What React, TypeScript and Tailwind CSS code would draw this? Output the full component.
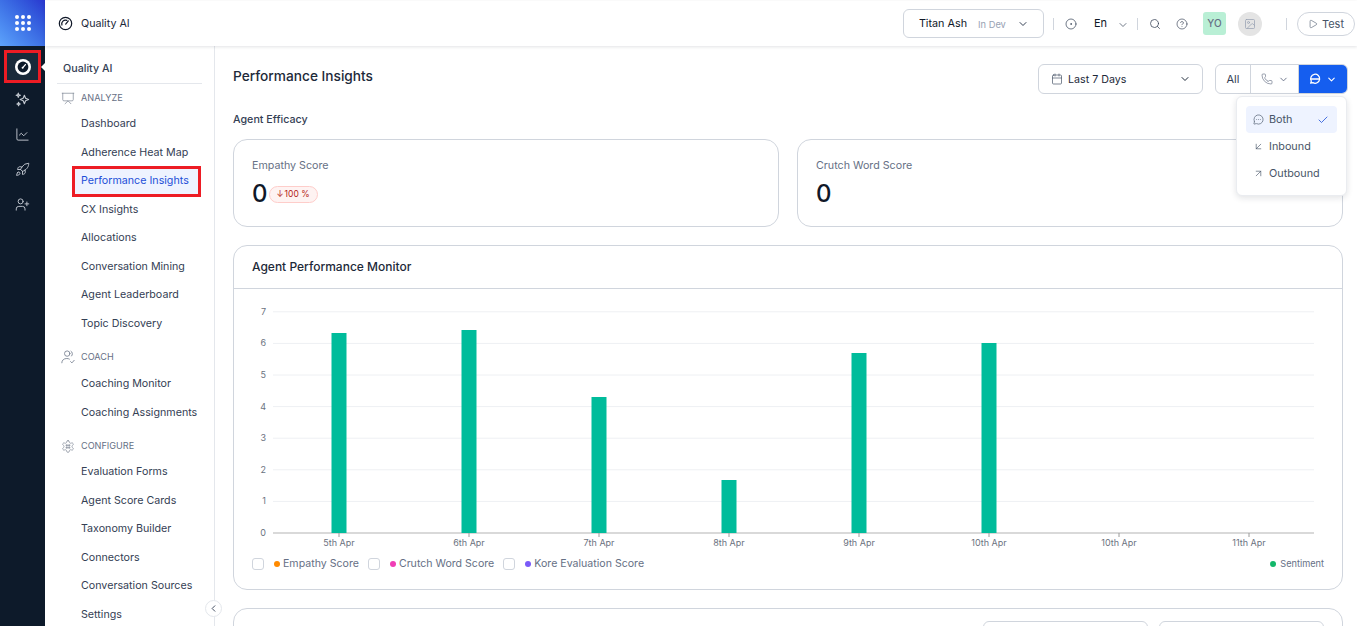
import {
  ArrowDownLeft,
  ArrowUpRight,
  Calendar,
  Check,
  ChevronDown,
  ChevronLeft,
  CircleDot,
  CircleHelp,
  Image,
  LineChart,
  MessageCircleMore,
  Phone,
  Play,
  Presentation,
  Rocket,
  Search,
  UserPlus,
} from "lucide-react";

const analyze = ["Dashboard", "Adherence Heat Map", "Performance Insights", "CX Insights", "Allocations", "Conversation Mining", "Agent Leaderboard", "Topic Discovery"];
const coach = ["Coaching Monitor", "Coaching Assignments"];
const configure = ["Evaluation Forms", "Agent Score Cards", "Taxonomy Builder", "Connectors", "Conversation Sources", "Settings"];

const bars = [
  { label: "5th Apr", x: 105, top: 44 },
  { label: "6th Apr", x: 235, top: 41 },
  { label: "7th Apr", x: 365, top: 108 },
  { label: "8th Apr", x: 495, top: 191 },
  { label: "9th Apr", x: 625, top: 64 },
  { label: "10th Apr", x: 755, top: 54 },
  { label: "10th Apr", x: 885, top: 244 },
  { label: "11th Apr", x: 1015, top: 244 },
];

const GaugeIcon = ({ className }: { className?: string }) => (
  <svg viewBox="0 0 16 16" className={className} fill="none" stroke="currentColor" strokeWidth="1.3" strokeLinecap="round">
    <circle cx="8" cy="8" r="6.6" />
    <path d="M8.2 8.6 11 5.2" />
    <path d="M4.2 9.6a4 4 0 0 1 5.2-5" />
  </svg>
);

const ActiveGauge = () => (
  <svg viewBox="0 0 16 16" className="h-[16px] w-[16px]" fill="none" strokeLinecap="round">
    <circle cx="8" cy="8" r="8" fill="white" />
    <circle cx="8" cy="8" r="5.4" fill="#0d1a2a" />
    <path d="M7.8 8.6 10.4 5.6" stroke="white" strokeWidth="1.3" />
    <circle cx="7.6" cy="8.8" r="1" fill="white" />
  </svg>
);

const StarsIcon = () => (
  <svg viewBox="0 0 16 16" className="h-[15px] w-[15px]" fill="none" stroke="currentColor" strokeWidth="1.2" strokeLinejoin="round">
    <path d="M10 3.5l1.3 3.2 3.2 1.3-3.2 1.3L10 12.5 8.7 9.3 5.5 8l3.2-1.3z" />
    <path d="M3.5 1.2l.6 1.7 1.7.6-1.7.6-.6 1.7-.6-1.7-1.7-.6 1.7-.6z" />
    <path d="M3.8 11l.5 1.3 1.3.5-1.3.5-.5 1.3-.5-1.3-1.3-.5 1.3-.5z" />
  </svg>
);

const CoachIcon = () => (
  <svg viewBox="0 0 14 14" className="h-[14px] w-[14px]" fill="none" stroke="currentColor" strokeWidth="0.9" strokeLinecap="round">
    <circle cx="6.2" cy="3.6" r="2.7" />
    <path d="M0.8 12.8c0-2.6 2-4.3 5-4.3 1 0 1.9.2 2.6.6" />
    <path d="M10 1.2a3 3 0 0 1 .6 4.8" />
    <path d="M9.6 11.6l1.3 1.3 2.3-2.6" />
  </svg>
);

const ConfigIcon = () => (
  <svg viewBox="0 0 24 24" className="h-[15px] w-[15px]" fill="none" stroke="currentColor" strokeWidth="1.2" strokeLinecap="round" strokeLinejoin="round">
    <path d="M12.22 2h-.44a2 2 0 0 0-2 2v.18a2 2 0 0 1-1 1.73l-.43.25a2 2 0 0 1-2 0l-.15-.08a2 2 0 0 0-2.73.73l-.22.38a2 2 0 0 0 .73 2.73l.15.1a2 2 0 0 1 1 1.72v.51a2 2 0 0 1-1 1.74l-.15.09a2 2 0 0 0-.73 2.73l.22.38a2 2 0 0 0 2.73.73l.15-.08a2 2 0 0 1 2 0l.43.25a2 2 0 0 1 1 1.73V20a2 2 0 0 0 2 2h.44a2 2 0 0 0 2-2v-.18a2 2 0 0 1 1-1.73l.43-.25a2 2 0 0 1 2 0l.15.08a2 2 0 0 0 2.73-.73l.22-.39a2 2 0 0 0-.73-2.73l-.15-.08a2 2 0 0 1-1-1.74v-.5a2 2 0 0 1 1-1.74l.15-.09a2 2 0 0 0 .73-2.73l-.22-.38a2 2 0 0 0-2.73-.73l-.15.08a2 2 0 0 1-2 0l-.43-.25a2 2 0 0 1-1-1.73V4a2 2 0 0 0-2-2z" />
    <path d="M10 8.5v7M14 8.5v7M8.5 10h7M8.5 14h7" />
  </svg>
);

const ChatLineIcon = () => (
  <svg viewBox="0 0 16 16" className="h-[12px] w-[12px]" fill="none" stroke="currentColor" strokeWidth="1.7" strokeLinecap="round" strokeLinejoin="round">
    <path d="M2.2 13.6l.9-2.8a6 6 0 1 1 2.2 2.1z" />
    <path d="M2.5 8h11" />
  </svg>
);

const NavRow = ({ label }: { label: string }) => {
  if (label === "Performance Insights") {
    return (
      <div className="relative z-10 my-[-1px] ml-[27px] mr-[13px] flex h-[30.5px] items-center border-[3px] border-[#ed1c24] bg-[#eef3ff] pl-[6px] text-[#1d4fd8]">
        {label}
      </div>
    );
  }
  return <div className="flex h-[28.5px] items-center pl-[36px] text-[#344054]">{label}</div>;
};

const SectionHead = ({ icon, label }: { icon: React.ReactNode; label: string }) => (
  <div className="flex h-[20px] items-center gap-[6px] pl-[16px] text-[9.1px] text-[#667085]">
    <span className="flex w-[14px] justify-center text-[#7c8594]">{icon}</span>
    {label}
  </div>
);

const Legend = ({ color, label }: { color: string; label: string }) => (
  <div className="flex items-center">
    <span className="mr-[10px] h-[12px] w-[12px] rounded-[3px] border border-[#d0d5dd]" />
    <span className={`mr-[3px] h-[6px] w-[6px] rounded-full ${color}`} />
    <span>{label}</span>
  </div>
);

const ScoreCard = ({ title, badge }: { title: string; badge?: boolean }) => (
  <div className="h-[88px] flex-1 rounded-[14px] border border-[#d0d5dd] px-[18px] pt-[18px]">
    <div className="text-[10.7px] leading-[16px] text-[#667085]">{title}</div>
    <div className="mt-[5px] flex items-center gap-[1px]">
      <span className="text-[24px] leading-[30px] font-medium text-[#101828]">0</span>
      {badge && (
        <span className="flex h-[17px] w-[49px] items-center justify-center rounded-full border border-[#fecdca] bg-[#fef3f2] text-[8.5px] text-[#b42318]">
          <span className="mr-[1px]">↓</span>100 %
        </span>
      )}
    </div>
  </div>
);

const Chart = () => (
  <svg width="1108" height="265" className="block" fontFamily="Inter, sans-serif">
    {[0, 1, 2, 3, 4, 5, 6, 7].map((n) => {
      const y = 244 - n * 31.6;
      return (
        <g key={n}>
          <text x="32" y={y + 3} fontSize="9" fill="#6b7280" textAnchor="end">
            {n}
          </text>
          <line x1="39" x2="1080" y1={y} y2={y} stroke={n === 0 ? "#b3b3b3" : "#eef0f3"} strokeWidth="1" />
        </g>
      );
    })}
    {bars.map((b, i) => (
      <g key={i}>
        <rect x={b.x - 7.5} y={b.top} width="15" height={244 - b.top} fill="#00bc9b" />
        <line x1={b.x} x2={b.x} y1="244" y2="248" stroke="#9a9a9a" />
        <text x={b.x} y="257" fontSize="9" fill="#6b7280" textAnchor="middle">
          {b.label}
        </text>
      </g>
    ))}
  </svg>
);

export default function App() {
  return (
    <div className="flex h-[626px] w-[1357px] overflow-hidden bg-white font-['Inter',sans-serif] text-[#101828]">
      <div className="flex w-[45px] shrink-0 flex-col bg-[#0d1a2a]">
        <div className="flex h-[46px] items-center justify-center bg-linear-to-tr from-[#5da3fb] to-[#2a36cf]">
          <svg viewBox="0 0 18 18" className="h-[18px] w-[18px]" fill="white">
            {[3, 9, 15].flatMap((y) => [3, 9, 15].map((x) => <circle key={`${x}-${y}`} cx={x} cy={y} r="2" />))}
          </svg>
        </div>
        <div className="relative mx-[4px] mt-[4px] flex h-[33px] w-[37px] items-center justify-center border-[3px] border-[#ed1c24] bg-[#1a2a3a]">
          <ActiveGauge />
          <span className="absolute left-[34px] h-0 w-0 border-y-[5px] border-r-[5px] border-y-transparent border-r-white" />
        </div>
        <div className="mt-[9px] flex flex-col items-center gap-[20px] text-[#c2c8d0]">
          <StarsIcon />
          <LineChart size={15} strokeWidth={1.5} />
          <Rocket size={15} strokeWidth={1.5} />
          <UserPlus size={15} strokeWidth={1.5} />
        </div>
      </div>

      <div className="flex min-w-0 flex-1 flex-col">
        <header className="relative z-10 mt-px flex h-[45px] shrink-0 items-center bg-white pl-[13px] shadow-[0_1px_3px_rgba(16,24,40,0.12)]">
          <GaugeIcon className="h-[15px] w-[15px] text-[#101828]" />
          <span className="ml-[8px] pt-[2px] text-[10.7px] text-[#1d2939]">Quality AI</span>
          <div className="ml-auto flex items-center">
            <div className="flex h-[29px] w-[141px] items-center rounded-[6px] border border-[#d0d5dd] pl-[15px] text-[10.8px]">
              <span className="pt-[2px]">Titan Ash</span>
              <span className="ml-[11px] pt-[2px] text-[9.3px] text-[#98a2b3]">In Dev</span>
              <ChevronDown size={12} className="ml-[11px] text-[#344054]" />
            </div>
            <span className="ml-[9px] h-[12px] w-px bg-[#d0d5dd]" />
            <CircleDot size={12} strokeWidth={1.4} className="ml-[11px] text-[#344054]" />
            <span className="ml-[17px] text-[11px]">En</span>
            <ChevronDown size={12} strokeWidth={1.4} className="ml-[10px] mt-[3px] text-[#344054]" />
            <span className="ml-[8px] h-[12px] w-px bg-[#d0d5dd]" />
            <Search size={12} strokeWidth={1.5} className="ml-[11px] text-[#344054]" />
            <CircleHelp size={12} strokeWidth={1.3} className="ml-[15px] text-[#344054]" />
            <span className="ml-[15px] flex h-[23px] w-[23px] items-center justify-center rounded-[3px] bg-[#b9efd5] text-[10px] font-medium text-[#667085]">YO</span>
            <span className="ml-[12px] flex h-[24px] w-[24px] items-center justify-center rounded-full bg-[#e4e4e4] text-[#98a2b3]">
              <Image size={12} strokeWidth={1.5} />
            </span>
            <span className="ml-[24px] h-[12px] w-px bg-[#d0d5dd]" />
            <div className="ml-[10px] mr-[2px] flex h-[24px] w-[58px] items-center justify-center gap-[4px] rounded-full border border-[#d0d5dd] pt-[1px] text-[11px] text-[#475467]">
              <Play size={10} strokeWidth={1.4} />
              Test
            </div>
          </div>
        </header>

        <div className="flex min-h-0 flex-1">
          <aside className="relative flex w-[170px] shrink-0 flex-col border-r border-[#e4e7ec] text-[10.7px]">
            <div className="flex h-[37px] shrink-0 items-end pb-[6px] pl-[18px] font-medium text-[#344054]">Quality AI</div>
            <div className="mx-[12px] h-px shrink-0 bg-[#e4e7ec]" />
            <div className="mt-[4px] shrink-0">
              <SectionHead icon={<Presentation size={15} strokeWidth={1.2} />} label="ANALYZE" />
            </div>
            <div className="mt-[2px] shrink-0">
              {analyze.map((n) => (
                <NavRow key={n} label={n} />
              ))}
            </div>
            <div className="mt-[9px] shrink-0">
              <SectionHead icon={<CoachIcon />} label="COACH" />
            </div>
            <div className="mt-[3px] shrink-0">
              {coach.map((n) => (
                <NavRow key={n} label={n} />
              ))}
            </div>
            <div className="mt-[9px] shrink-0">
              <SectionHead icon={<ConfigIcon />} label="CONFIGURE" />
            </div>
            <div className="mt-[2px] shrink-0">
              {configure.map((n) => (
                <NavRow key={n} label={n} />
              ))}
            </div>
            <span className="absolute right-[-8px] bottom-[9px] flex h-[17px] w-[17px] items-center justify-center rounded-full border border-[#e4e7ec] bg-white text-[#344054]">
              <ChevronLeft size={11} />
            </span>
          </aside>

          <main className="relative min-w-0 flex-1 pl-[18px] pr-[14px]">
            <div className="flex h-[48px] items-start justify-between">
              <div className="mt-[19px] text-[13.7px] leading-[22px] font-medium text-[#1d2939]">Performance Insights</div>
              <div className="mt-[18px] flex items-center">
                <div className="flex h-[30px] w-[165px] items-center rounded-[6px] border border-[#d0d5dd] pl-[12px] pr-[11px] text-[10.7px] text-[#1d2939]">
                  <Calendar size={12} strokeWidth={1.4} className="mr-[5px] text-[#475467]" />
                  <span className="pt-[2px]">Last 7 Days</span>
                  <ChevronDown size={12} className="ml-auto" />
                </div>
                <div className="ml-[12px] mr-[-5px] flex h-[30px] overflow-hidden rounded-[6px] border border-[#d0d5dd]">
                  <span className="flex w-[34px] items-center justify-center text-[11px] text-[#344054]">All</span>
                  <span className="flex w-[49px] items-center justify-center gap-[5px] border-x border-[#d0d5dd] text-[#667085]">
                    <Phone size={12} strokeWidth={1.3} />
                    <ChevronDown size={11} />
                  </span>
                  <span className="flex w-[48px] items-center justify-center gap-[5px] bg-[#155eef] text-white">
                    <ChatLineIcon />
                    <ChevronDown size={11} strokeWidth={2.4} />
                  </span>
                </div>
              </div>
            </div>

            <div className="mt-[18px] text-[10.7px] leading-[16px] font-medium text-[#344054]">Agent Efficacy</div>

            <div className="mt-[11px] flex gap-[18px]">
              <ScoreCard title="Empathy Score" badge />
              <ScoreCard title="Crutch Word Score" />
            </div>

            <div className="mt-[18px] h-[345px] rounded-[14px] border border-[#d0d5dd]">
              <div className="flex h-[43px] items-center border-b border-[#d0d5dd] pl-[18px] text-[12px] font-medium text-[#1d2939]">
                Agent Performance Monitor
              </div>
              <Chart />
              <div className="mt-[2px] flex items-center justify-between pl-[18px] pr-[18px] text-[10.6px] text-[#667085]">
                <div className="flex items-center gap-[9px]">
                  <Legend color="bg-[#ff8a00]" label="Empathy Score" />
                  <Legend color="bg-[#f03db5]" label="Crutch Word Score" />
                  <Legend color="bg-[#7a5af8]" label="Kore Evaluation Score" />
                </div>
                <div className="flex items-center gap-[4px] text-[9.2px]">
                  <span className="h-[6px] w-[6px] rounded-full bg-[#12b76a]" />
                  Sentiment
                </div>
              </div>
            </div>

            <div className="mt-[18px] flex h-[60px] justify-end gap-[11px] rounded-[14px] border border-[#d0d5dd] pr-[18px] pt-[12px]">
              <span className="h-[40px] w-[165px] rounded-[6px] border border-[#d0d5dd]" />
              <span className="h-[40px] w-[165px] rounded-[6px] border border-[#d0d5dd]" />
            </div>

            <div className="absolute top-[50px] right-[10px] h-[100px] w-[111px] rounded-[6px] border border-[#eaecf0] bg-white p-[9px] text-[10.8px] text-[#475467] shadow-[0_2px_6px_rgba(16,24,40,0.12)]">
              <div className="flex h-[27px] items-center rounded-[4px] bg-[#eef3ff] pl-[7px] pr-[8px]">
                <MessageCircleMore size={11} strokeWidth={1.4} className="mr-[5px]" />
                <span className="pt-[2px]">Both</span>
                <Check size={12} strokeWidth={1.6} className="ml-auto text-[#1d4fd8]" />
              </div>
              <div className="flex h-[27px] items-center pl-[7px]">
                <ArrowDownLeft size={11} strokeWidth={1.4} className="mr-[5px]" />
                <span className="pt-[2px]">Inbound</span>
              </div>
              <div className="flex h-[27px] items-center pl-[7px]">
                <ArrowUpRight size={11} strokeWidth={1.4} className="mr-[5px]" />
                <span className="pt-[2px]">Outbound</span>
              </div>
            </div>
          </main>
        </div>
      </div>
    </div>
  );
}
